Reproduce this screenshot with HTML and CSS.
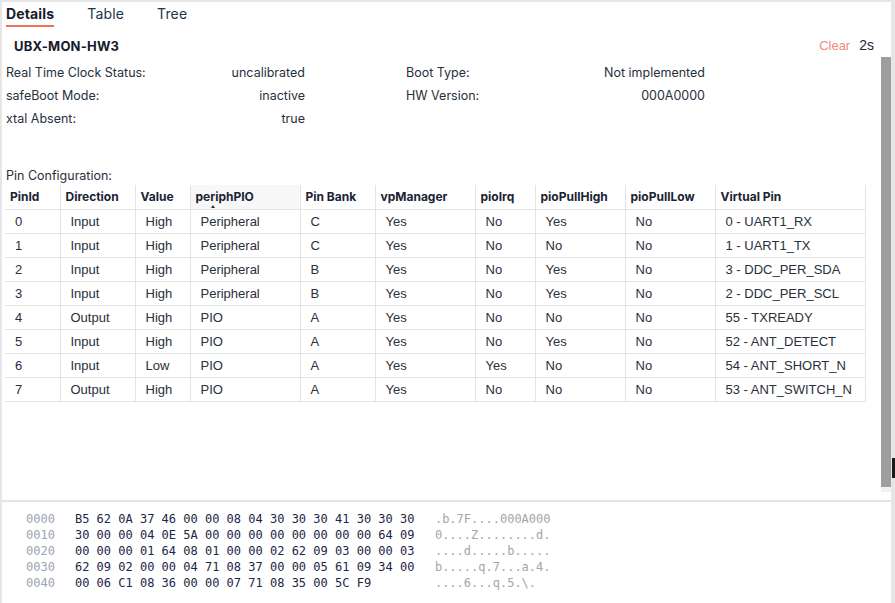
FILE: index.html
```html
<!DOCTYPE html>
<html>
<head>
<meta charset="utf-8">
<link rel="stylesheet" href="styles.css">
</head>
<body>
<div class="app">
  <div class="tabs">
    <div class="tab active">Details</div>
    <div class="tab">Table</div>
    <div class="tab">Tree</div>
  </div>
  <div class="titlebar">
    <div class="title">UBX-MON-HW3</div>
    <div class="actions"><span class="clear">Clear</span><span class="age">2s</span></div>
  </div>
  <div class="scroller">
    <div class="content">
      <div class="kv">
        <div class="pair"><span>Real Time Clock Status:</span><span>uncalibrated</span></div>
        <div class="pair"><span>Boot Type:</span><span>Not implemented</span></div>
        <div class="pair"><span>safeBoot Mode:</span><span>inactive</span></div>
        <div class="pair"><span>HW Version:</span><span>000A0000</span></div>
        <div class="pair"><span>xtal Absent:</span><span>true</span></div>
        <div class="pair"></div>
      </div>
      <div class="section-label">Pin Configuration:</div>
      <table class="pins">
        <colgroup>
          <col class="c1"><col class="c2"><col class="c3"><col class="c4"><col class="c5">
          <col class="c6"><col class="c7"><col class="c8"><col class="c9"><col class="c10">
        </colgroup>
        <thead>
          <tr>
            <th>PinId</th><th>Direction</th><th>Value</th><th class="sorted">periphPIO<span class="sort-mark"></span></th><th>Pin Bank</th>
            <th>vpManager</th><th>pioIrq</th><th>pioPullHigh</th><th>pioPullLow</th><th>Virtual Pin</th>
          </tr>
        </thead>
        <tbody>
          <tr><td>0</td><td>Input</td><td>High</td><td>Peripheral</td><td>C</td><td>Yes</td><td>No</td><td>Yes</td><td>No</td><td>0 - UART1_RX</td></tr>
          <tr><td>1</td><td>Input</td><td>High</td><td>Peripheral</td><td>C</td><td>Yes</td><td>No</td><td>No</td><td>No</td><td>1 - UART1_TX</td></tr>
          <tr><td>2</td><td>Input</td><td>High</td><td>Peripheral</td><td>B</td><td>Yes</td><td>No</td><td>Yes</td><td>No</td><td>3 - DDC_PER_SDA</td></tr>
          <tr><td>3</td><td>Input</td><td>High</td><td>Peripheral</td><td>B</td><td>Yes</td><td>No</td><td>Yes</td><td>No</td><td>2 - DDC_PER_SCL</td></tr>
          <tr><td>4</td><td>Output</td><td>High</td><td>PIO</td><td>A</td><td>Yes</td><td>No</td><td>No</td><td>No</td><td>55 - TXREADY</td></tr>
          <tr><td>5</td><td>Input</td><td>High</td><td>PIO</td><td>A</td><td>Yes</td><td>No</td><td>Yes</td><td>No</td><td>52 - ANT_DETECT</td></tr>
          <tr><td>6</td><td>Input</td><td>Low</td><td>PIO</td><td>A</td><td>Yes</td><td>Yes</td><td>No</td><td>No</td><td>54 - ANT_SHORT_N</td></tr>
          <tr><td>7</td><td>Output</td><td>High</td><td>PIO</td><td>A</td><td>Yes</td><td>No</td><td>No</td><td>No</td><td>53 - ANT_SWITCH_N</td></tr>
        </tbody>
      </table>
    </div>
    <div class="scrollbar"><div class="thumb"></div></div>
  </div>
  <div class="hex">
    <div class="hexrow"><span class="off">0000</span><span class="bytes">B5 62 0A 37 46 00 00 08 04 30 30 30 41 30 30 30</span><span class="ascii">.b.7F....000A000</span></div>
    <div class="hexrow"><span class="off">0010</span><span class="bytes">30 00 00 04 0E 5A 00 00 00 00 00 00 00 00 64 09</span><span class="ascii">0....Z........d.</span></div>
    <div class="hexrow"><span class="off">0020</span><span class="bytes">00 00 00 01 64 08 01 00 00 02 62 09 03 00 00 03</span><span class="ascii">....d.....b.....</span></div>
    <div class="hexrow"><span class="off">0030</span><span class="bytes">62 09 02 00 00 04 71 08 37 00 00 05 61 09 34 00</span><span class="ascii">b.....q.7...a.4.</span></div>
    <div class="hexrow"><span class="off">0040</span><span class="bytes">00 06 C1 08 36 00 00 07 71 08 35 00 5C F9</span><span class="ascii">....6...q.5.\.</span></div>
  </div>
  <div class="resize-mark"></div>
</div>
</body>
</html>
```

FILE: styles.css
```css
html, body {
  margin: 0;
  padding: 0;
  background: #ffffff;
}

body {
  width: 895px;
  height: 603px;
  overflow: hidden;
  font-family: Inter, "Noto Sans", sans-serif;
  color: #222a36;
}

.app {
  position: relative;
  height: 603px;
  box-sizing: border-box;
  border-top: 2px solid #e6e6e6;
  border-left: 2px solid #e6e6e6;
  border-right: 4px solid #e6e6e6;
  display: flex;
  flex-direction: column;
}

/* Tabs */
.tabs {
  display: flex;
  gap: 33px;
  padding-left: 4px;
  height: 25px;
}

.tab {
  font-size: 14px;
  line-height: 18px;
  padding-top: 3px;
  color: #22344e;
  letter-spacing: 0.15px;
}

.tab.active {
  font-weight: 700;
  color: #141b2b;
  border-bottom: 2px solid #e8735a;
  height: 20px;
}

/* Title row */
.titlebar {
  height: 30px;
  display: flex;
  align-items: flex-start;
  justify-content: space-between;
  padding: 0 17px 0 12px;
  box-sizing: border-box;
}

.title {
  font-size: 13px;
  font-weight: 700;
  line-height: 16px;
  padding-top: 11px;
  color: #141b2b;
  letter-spacing: 0.2px;
}

.actions {
  display: flex;
  align-items: baseline;
  gap: 9px;
  padding-top: 10px;
}

.clear {
  font-family: "Liberation Sans", Arial, sans-serif;
  font-size: 13px;
  color: #f28b82;
}

.age {
  font-family: "Liberation Sans", Arial, sans-serif;
  font-size: 14px;
  color: #1c2640;
}

/* Scroll area */
.scroller {
  height: 435px;
  display: flex;
}

.content {
  flex: 1;
  padding-left: 4px;
  padding-top: 4px;
  min-width: 0;
}

.scrollbar {
  width: 10px;
  background: #f1f1f1;
  display: flex;
  flex-direction: column;
}

.thumb {
  height: 430px;
  background: #9e9e9e;
}

/* Key values */
.kv {
  display: grid;
  grid-template-columns: 299px 299px;
  column-gap: 101px;
  grid-auto-rows: 23px;
  font-size: 12.5px;
  color: #27303d;
}

.pair {
  display: flex;
  justify-content: space-between;
  align-items: center;
}

.section-label {
  margin-top: 38px;
  font-size: 12.5px;
  line-height: 16px;
  color: #27303d;
}

/* Table */
.pins {
  margin-left: -1px;
  margin-top: 1px;
  border-collapse: collapse;
  table-layout: fixed;
  width: 860px;
}

.c1 { width: 55px; }
.c2 { width: 75px; }
.c3 { width: 55px; }
.c4 { width: 110px; }
.c5 { width: 75px; }
.c6 { width: 100px; }
.c7 { width: 60px; }
.c8 { width: 90px; }
.c9 { width: 90px; }
.c10 { width: 150px; }

.pins th,
.pins td {
  border-right: 1px solid #e4e4e4;
  border-bottom: 1px solid #e4e4e4;
  height: 24px;
  box-sizing: border-box;
  white-space: nowrap;
  overflow: hidden;
  text-align: left;
  vertical-align: middle;
}

.pins th {
  font-size: 12px;
  font-weight: 700;
  color: #1a2333;
  padding: 0 0 0 5px;
}

.pins th.sorted {
  background: #f7f7f7;
  position: relative;
}

.sort-mark {
  position: absolute;
  left: 20px;
  bottom: 1px;
  width: 0;
  height: 0;
  border-left: 2px solid transparent;
  border-right: 2px solid transparent;
  border-bottom: 3px solid #333;
}

.pins td {
  font-family: "Liberation Sans", Arial, sans-serif;
  font-size: 13px;
  color: #2a2f3a;
  padding: 0 0 0 10px;
}

/* Hex dump */
.hex {
  flex: 1;
  margin-top: 8px;
  border-top: 2px solid #e4e4e4;
  padding: 9px 0 0 24px;
  font-family: "DejaVu Sans Mono", monospace;
  font-size: 12px;
  line-height: 16px;
}

.hexrow {
  display: flex;
  white-space: pre;
}

.off {
  color: #9aa4b6;
  margin-right: 20px;
}

.bytes {
  width: 339px;
  margin-right: 21px;
  color: #1c2646;
}

.ascii {
  color: #a6a6a6;
}

.resize-mark {
  position: absolute;
  right: -4px;
  top: 456px;
  width: 3px;
  height: 20px;
  background: #1a1a1a;
}
```
